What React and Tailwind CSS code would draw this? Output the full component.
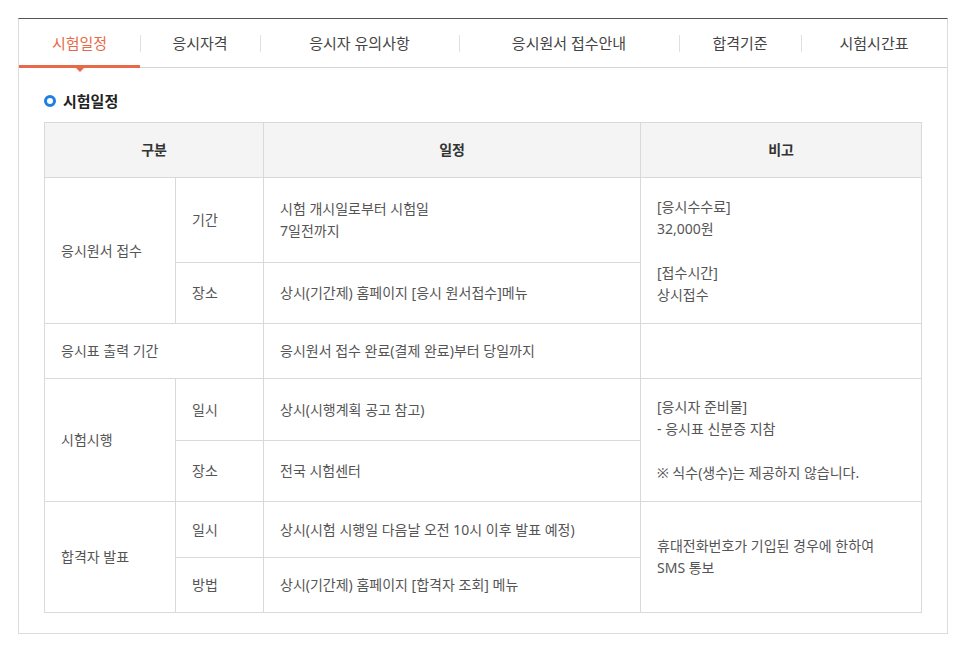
const tabs = [
  { label: '시험일정', w: 'w-[121px]', active: true },
  { label: '응시자격', w: 'w-[120px]' },
  { label: '응시자 유의사항', w: 'w-[199px]' },
  { label: '응시원서 접수안내', w: 'w-[220px]' },
  { label: '합격기준', w: 'w-[122px]' },
  { label: '시험시간표', w: 'flex-1' },
];

const td = 'border border-[#d9d9d9] px-4 align-middle';

export default function App() {
  return (
    <div className="min-h-[651px] bg-white pt-[18px] pl-[18px] font-['Noto_Sans','Noto_Sans_CJK_KR',sans-serif] text-[14px] text-[#555]">
      <div className="w-[930px] h-[616px] border border-[#dcdcdc] border-t-[#555]">
        {/* tabs */}
        <div className="flex h-[49px] border-b border-[#d4d4d4]">
          {tabs.map((t, i) => (
            <div key={t.label} className={`relative flex items-center justify-center ${t.w}`}>
              {i > 0 && <span className="absolute left-0 top-[16px] h-[17px] w-px bg-[#e0e0e0]" />}
              <span className={`text-[15px] ${t.active ? 'text-[#e8694a]' : 'text-[#444]'}`}>{t.label}</span>
              {t.active && (
                <>
                  <span className="absolute left-0 right-0 bottom-[-1px] h-[3px] bg-[#e8694a]" />
                  <span className="absolute left-1/2 -translate-x-1/2 bottom-[-5px] w-0 h-0 border-l-[4px] border-r-[4px] border-t-[4px] border-l-transparent border-r-transparent border-t-[#e8694a]" />
                </>
              )}
            </div>
          ))}
        </div>

        <div className="px-[25px]">
          <h3 className="mt-[22px] flex items-center gap-[7px] h-[22px] text-[15px] font-bold text-[#222]">
            <span className="w-[12px] h-[12px] rounded-full border-[3px] border-[#1f7ee3]" />
            시험일정
          </h3>

          <table className="mt-[10px] w-[878px] border-collapse table-fixed leading-[22px]">
            <colgroup>
              <col className="w-[131px]" />
              <col className="w-[88px]" />
              <col className="w-[377px]" />
              <col />
            </colgroup>
            <thead>
              <tr className="h-[55px] bg-[#f4f4f4] text-[#333] font-bold">
                <th colSpan={2} className={`${td} text-center`}>구분</th>
                <th className={`${td} text-center`}>일정</th>
                <th className={`${td} text-center`}>비고</th>
              </tr>
            </thead>
            <tbody>
              <tr className="h-[85px]">
                <td rowSpan={2} className={td}>응시원서 접수</td>
                <td className={td}>기간</td>
                <td className={td}>시험 개시일로부터 시험일<br />7일전까지</td>
                <td rowSpan={2} className={td}>
                  [응시수수료]<br />32,000원<br /><br />[접수시간]<br />상시접수
                </td>
              </tr>
              <tr className="h-[61px]">
                <td className={td}>장소</td>
                <td className={td}>상시(기간제) 홈페이지 [응시 원서접수]메뉴</td>
              </tr>
              <tr className="h-[55px]">
                <td colSpan={2} className={td}>응시표 출력 기간</td>
                <td className={td}>응시원서 접수 완료(결제 완료)부터 당일까지</td>
                <td className={td}></td>
              </tr>
              <tr className="h-[62px]">
                <td rowSpan={2} className={td}>시험시행</td>
                <td className={td}>일시</td>
                <td className={td}>상시(시행계획 공고 참고)</td>
                <td rowSpan={2} className={td}>
                  [응시자 준비물]<br />- 응시표 신분증 지참<br /><br />※ 식수(생수)는 제공하지 않습니다.
                </td>
              </tr>
              <tr className="h-[61px]">
                <td className={td}>장소</td>
                <td className={td}>전국 시험센터</td>
              </tr>
              <tr className="h-[56px]">
                <td rowSpan={2} className={td}>합격자 발표</td>
                <td className={td}>일시</td>
                <td className={td}>상시(시험 시행일 다음날 오전 10시 이후 발표 예정)</td>
                <td rowSpan={2} className={td}>
                  휴대전화번호가 기입된 경우에 한하여<br />SMS 통보
                </td>
              </tr>
              <tr className="h-[55px]">
                <td className={td}>방법</td>
                <td className={td}>상시(기간제) 홈페이지 [합격자 조회] 메뉴</td>
              </tr>
            </tbody>
          </table>
        </div>
      </div>
    </div>
  );
}
